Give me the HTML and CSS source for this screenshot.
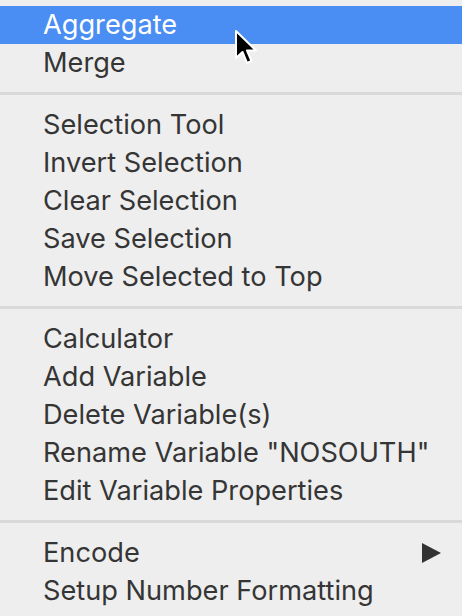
FILE: index.html
```html
<!DOCTYPE html>
<html>
<head>
<meta charset="utf-8">
<link rel="stylesheet" href="styles.css">
</head>
<body>
<div class="menu">
  <div class="group">
    <div class="item active">Aggregate</div>
    <div class="item">Merge</div>
  </div>
  <div class="sep"></div>
  <div class="group">
    <div class="item">Selection Tool</div>
    <div class="item">Invert Selection</div>
    <div class="item">Clear Selection</div>
    <div class="item">Save Selection</div>
    <div class="item">Move Selected to Top</div>
  </div>
  <div class="sep"></div>
  <div class="group">
    <div class="item">Calculator</div>
    <div class="item">Add Variable</div>
    <div class="item">Delete Variable(s)</div>
    <div class="item">Rename Variable "NOSOUTH"</div>
    <div class="item">Edit Variable Properties</div>
  </div>
  <div class="sep"></div>
  <div class="group">
    <div class="item sub">Encode<svg class="arrow" width="19" height="20" viewBox="0 0 19 20"><polygon points="0,0 19,10 0,20" fill="#333"/></svg></div>
    <div class="item">Setup Number Formatting</div>
  </div>
  <svg class="cursor" width="30" height="40" viewBox="0 0 30 40">
    <path d="M3 2 L3 29 L9.5 23 L14 34 L18.5 32 L14 21.5 L23 21.5 Z" fill="#000" stroke="#fff" stroke-width="2" stroke-linejoin="round"/>
  </svg>
</div>
</body>
</html>
```

FILE: styles.css
```css
html, body {
  margin: 0;
  padding: 0;
  background: #ededed;
}
.menu {
  position: relative;
  width: 462px;
  height: 616px;
  padding-top: 6px;
  box-sizing: border-box;
  background: #eeeeee;
  font-family: Inter, "Noto Sans", sans-serif;
  font-size: 27.2px;
  color: #353535;
  overflow: hidden;
}
.item {
  height: 38px;
  line-height: 38px;
  padding-left: 43px;
  padding-right: 21px;
  display: flex;
  align-items: center;
  justify-content: space-between;
  white-space: nowrap;
}
.item.active {
  background: #4a8ef3;
  color: #ffffff;
}
.sep {
  height: 3px;
  margin: 10px 0 11px;
  background: #d9d9d9;
}
.cursor {
  position: absolute;
  left: 233px;
  top: 29px;
}
```
